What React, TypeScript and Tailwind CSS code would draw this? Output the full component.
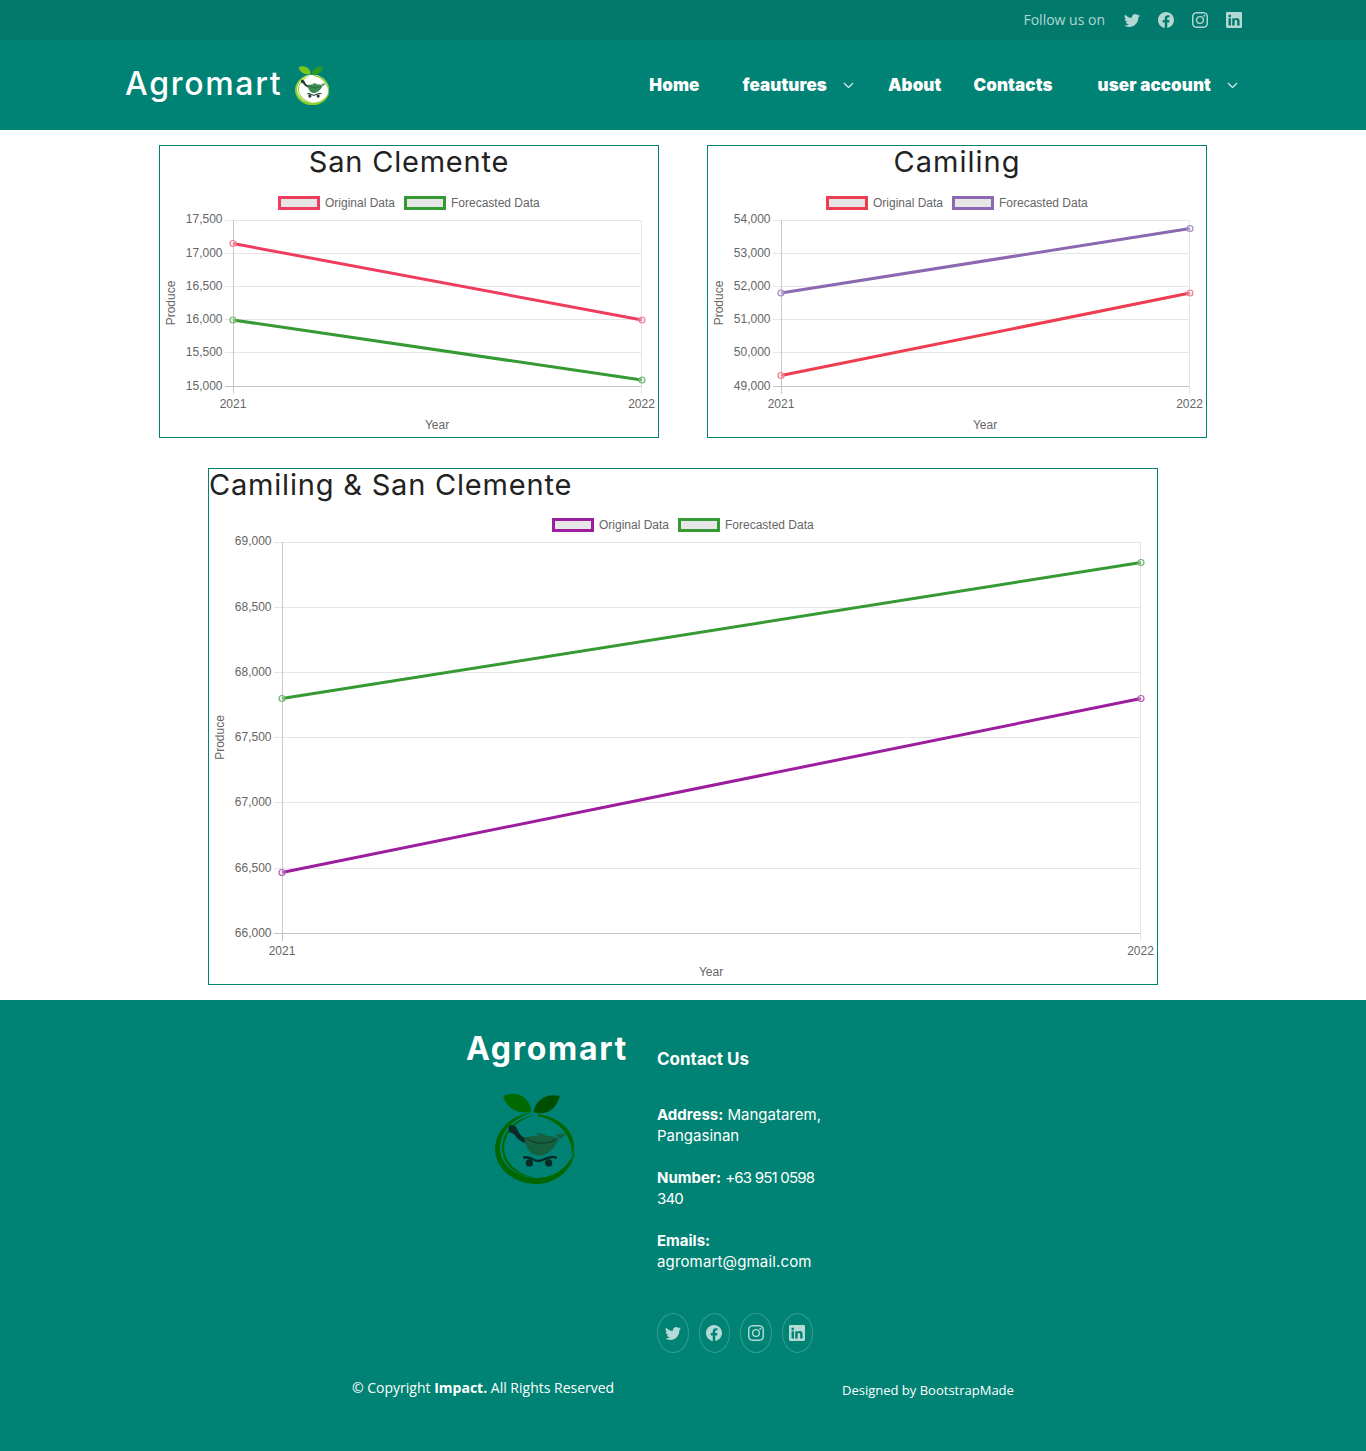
import React from "react";
import { BsChevronDown, BsFacebook, BsInstagram, BsLinkedin, BsTwitter } from "react-icons/bs";

interface Series {
  name: string;
  color: string;
  marker: string;
  from: [number, number];
  to: [number, number];
}

interface ChartProps {
  box: [number, number, number, number];
  left: number;
  right: number;
  ticks: { label: string; y: number }[];
  bottom: number;
  legendY: number;
  legendX: [number, number];
  yLabelX: number;
  yearX: number;
  series: Series[];
}

const ARIAL = "'Liberation Sans', Arial, sans-serif";

const LineChart: React.FC<ChartProps> = ({
  box,
  left,
  right,
  ticks,
  bottom,
  legendY,
  legendX,
  yLabelX,
  yearX,
  series,
}) => {
  const top = ticks[0].y;
  const midY = (top + bottom) / 2;
  return (
    <svg
      className="block"
      width={box[2]}
      height={box[3]}
      viewBox={box.join(" ")}
      fontFamily={ARIAL}
      fontSize={12}
      fill="#666"
    >
      {series.map((s, i) => (
        <g key={s.name}>
          <rect x={legendX[i] + 1.5} y={legendY - 3.5} width={39} height={11} fill="#e6e6e6" stroke={s.color} strokeWidth={3} />
          <text x={legendX[i] + 47} y={legendY + 6}>{s.name}</text>
        </g>
      ))}
      {ticks.map((t, i) => (
        <g key={t.label}>
          <line x1={left - 8} x2={right} y1={Math.round(t.y) + 0.5} y2={Math.round(t.y) + 0.5} stroke={i === ticks.length - 1 ? "#c4c4c4" : "#e5e5e5"} />
          <text x={left - 10.5} y={t.y + (i === 0 ? 3 : 4)} textAnchor="end">{t.label}</text>
        </g>
      ))}
      <line x1={left + 0.5} x2={left + 0.5} y1={top} y2={bottom + 8} stroke="#c8c8c8" />
      <line x1={right - 0.5} x2={right - 0.5} y1={top} y2={bottom + 8} stroke="#e5e5e5" />
      <text x={left} y={bottom + 22} textAnchor="middle">2021</text>
      <text x={right - 0.5} y={bottom + 22} textAnchor="middle">2022</text>
      <text x={yearX} y={bottom + 43} textAnchor="middle">Year</text>
      <text transform={`translate(${yLabelX + 1} ${midY}) rotate(-90)`} textAnchor="middle">Produce</text>
      {series.map((s) => (
        <g key={s.name}>
          <line x1={s.from[0]} y1={s.from[1]} x2={s.to[0]} y2={s.to[1]} stroke={s.color} strokeWidth={3} />
          <circle cx={s.from[0]} cy={s.from[1]} r={3} fill="#e6e6e6" fillOpacity={0.4} stroke={s.marker} strokeWidth={1.2} />
          <circle cx={s.to[0]} cy={s.to[1]} r={3} fill="#e6e6e6" fillOpacity={0.4} stroke={s.marker} strokeWidth={1.2} />
        </g>
      ))}
    </svg>
  );
};

const RED = "#ee3d5e";
const CORAL = "#ee3d4f";
const GREEN = "#359a34";
const PURPLE = "#8b68b1";
const MAGENTA = "#9c1e9f";

const tick = (labels: string[], ys: number[]) => labels.map((label, i) => ({ label, y: ys[i] }));

const Logo: React.FC<{ size: number; small?: boolean }> = ({ size, small }) => {
  const leafA = small ? "#7cc520" : "#006a00";
  const leafB = small ? "#2d9a24" : "#004f00";
  const ring = small ? "#8fce2f" : "#006600";
  const cart = small ? "#1d3b2f" : "#0b2a26";
  const basket = small ? "#3c8a4f" : "#17603f";
  return (
    <svg width={size} height={size * 1.15} viewBox="0 0 80 92">
      {small && <ellipse cx="40" cy="56" rx="37" ry="34" fill="#fff" />}
      <path d="M8 5 C20 -1 34 5 36 20 C24 24 12 18 8 5Z" fill={leafA} />
      <path d="M64 5 C52 2 40 8 38 21 C50 25 61 18 64 5Z" fill={leafB} />
      <path d="M37 21 C14 24 0 40 0 58 C1 78 20 92 42 92 C62 91 78 76 79 58 C73 76 58 86 40 86 C19 85 5 72 5 56 C5 40 18 27 37 21Z" fill={ring} />
      <path d="M42 23 C62 25 77 38 78 54 C78 58 77 62 76 64 C77 44 62 28 42 25Z" fill={ring} />
      <path d="M38 24 C20 27 7 40 7 56 C7 72 20 84 38 85 C22 82 9 70 9 56 C9 41 22 29 38 24Z" fill={ring} />
      <path d="M15 34 C20 33 22 37 23 40 C25 44 28 46 31 47 L32 52 C26 51 22 47 20 44 C18 41 16 42 15 41 C13 39 13 35 15 34Z" fill={cart} />
      <path d="M29 46 C40 43 57 43 63 47 C59 58 50 64 44 64 C35 64 30 56 29 46Z" fill={basket} />
      <path d="M31 47 C40 53 50 53 60 48" fill="none" stroke={cart} strokeWidth={0.8} />
      <path d="M28 66 C34 63 38 70 44 69 C50 68 54 63 61 66" fill="none" stroke={cart} strokeWidth={2.4} />
      <circle cx="34" cy="71" r="3.6" fill={cart} />
      <circle cx="53" cy="71" r="3.6" fill={cart} />
      <path d="M40 41 L50 43 L46 47Z M60 43 L71 42 L64 48Z" fill={basket} />
    </svg>
  );
};

const socials = [BsTwitter, BsFacebook, BsInstagram, BsLinkedin];

export default function App() {
  return (
    <div className="min-h-[1451px] bg-white font-['Inter',sans-serif]">
      <div className="h-10 bg-[#017a6d] flex items-center justify-end pr-[124px] text-[14px] text-white/70 font-['Open_Sans',sans-serif]">
        <span className="mr-[19px] -mt-px">Follow us on</span>
        <div className="flex gap-[18px]">
          {socials.map((Icon, i) => (
            <Icon key={i} size={16} />
          ))}
        </div>
      </div>

      <header className="h-[90px] bg-[#008374] flex items-center pl-[125px] pr-[128px] text-white">
        <div className="flex items-center">
          <span className="text-[32px] font-medium tracking-[1.7px] -mt-[3px]">Agromart</span>
          <span className="ml-[13px]">
            <Logo size={35} small />
          </span>
        </div>
        <nav className="ml-auto flex items-center text-[17px] font-black tracking-[0.1px] mt-px">
          <a>Home</a>
          <a className="ml-[43px]">feautures</a>
          <BsChevronDown size={11} strokeWidth={0.8} className="ml-[16px]" />
          <a className="ml-[34px]">About</a>
          <a className="ml-[32px]">Contacts</a>
          <a className="ml-[45px]">user account</a>
          <BsChevronDown size={11} strokeWidth={0.8} className="ml-[16px]" />
        </nav>
      </header>

      <main className="pt-[15px] pb-[15px] flex flex-col items-center text-[#222]">
        <div className="flex gap-12">
          <section className="w-[500px] h-[293px] border border-[#008374]">
            <h2 className="h-10 text-center text-[29px] leading-[31px] tracking-[0.8px] font-normal">San Clemente</h2>
            <LineChart
              box={[160, 186, 498, 251]}
              left={233}
              right={642}
              ticks={tick(["17,500", "17,000", "16,500", "16,000", "15,500", "15,000"], [220, 253, 286, 319, 352, 386])}
              bottom={386}
              legendY={201}
              legendX={[278, 404]}
              yLabelX={174}
              yearX={437}
              series={[
                { name: "Original Data", color: RED, marker: "#f37b92", from: [233, 243.5], to: [642, 320] },
                { name: "Forecasted Data", color: GREEN, marker: "#6fb86e", from: [233, 320], to: [642, 380] },
              ]}
            />
          </section>
          <section className="w-[500px] h-[293px] border border-[#008374]">
            <h2 className="h-10 text-center text-[29px] leading-[31px] tracking-[1px] font-normal">Camiling</h2>
            <LineChart
              box={[708, 186, 498, 251]}
              left={781}
              right={1190}
              ticks={tick(["54,000", "53,000", "52,000", "51,000", "50,000", "49,000"], [220, 253, 286, 319, 352, 386])}
              bottom={386}
              legendY={201}
              legendX={[826, 952]}
              yLabelX={722}
              yearX={985}
              series={[
                { name: "Original Data", color: CORAL, marker: "#f37b92", from: [781, 375.5], to: [1190, 293] },
                { name: "Forecasted Data", color: PURPLE, marker: "#a78cc6", from: [781, 293], to: [1190, 228.5] },
              ]}
            />
          </section>
        </div>

        <section className="mt-[30px] w-[950px] h-[517px] border border-[#008374]">
          <h2 className="h-10 text-[29px] leading-[31px] tracking-[0.8px] font-normal">Camiling &amp; San Clemente</h2>
          <LineChart
            box={[209, 509, 948, 475]}
            left={282}
            right={1141}
            ticks={tick(
              ["69,000", "68,500", "68,000", "67,500", "67,000", "66,500", "66,000"],
              [542, 607, 672, 737, 802, 867.5, 933],
            )}
            bottom={933}
            legendY={523}
            legendX={[552, 678]}
            yLabelX={223}
            yearX={711}
            series={[
              { name: "Original Data", color: MAGENTA, marker: "#b65cb9", from: [282, 872.5], to: [1141, 698.5] },
              { name: "Forecasted Data", color: GREEN, marker: "#6fb86e", from: [282, 698.5], to: [1141, 562.5] },
            ]}
          />
        </section>
      </main>

      <footer className="h-[451px] bg-[#008374] text-white">
        <div className="flex pl-[466px] pt-[30px]">
          <div className="w-[191px]">
            <h3 className="text-[32px] leading-[38px] font-bold tracking-[1.7px]">Agromart</h3>
            <div className="ml-[29px] mt-[23px]">
              <Logo size={81} />
            </div>
          </div>
          <div className="w-[170px] text-[15px] leading-[21px]">
            <h4 className="mt-[19px] text-[17px] leading-[20px] font-bold">Contact Us</h4>
            <p className="mt-[35px]">
              <b>Address:</b> Mangatarem, Pangasinan
            </p>
            <p className="mt-[21px]">
              <b>Number:</b> <span className="tracking-[-0.8px]">+63 951 0598 340</span>
            </p>
            <p className="mt-[21px]">
              <b>Emails:</b>
              <br />
              <span className="tracking-[0.15px]">agromart@gmail.com</span>
            </p>
            <div className="mt-[41px] flex gap-[10px] text-white/70">
              {socials.map((Icon, i) => (
                <span key={i} className="w-[31.5px] h-10 rounded-[50%] border border-white/20 flex items-center justify-center">
                  <Icon size={16} />
                </span>
              ))}
            </div>
          </div>
        </div>
        <div className="flex pl-[352px] mt-[25px] font-['Open_Sans',sans-serif]">
          <p className="w-[490px] text-[14px] leading-[20px]">
            © Copyright <b>Impact.</b> All Rights Reserved
          </p>
          <p className="mt-[2px] text-[13px] leading-[20px]">Designed by BootstrapMade</p>
        </div>
      </footer>
    </div>
  );
}
